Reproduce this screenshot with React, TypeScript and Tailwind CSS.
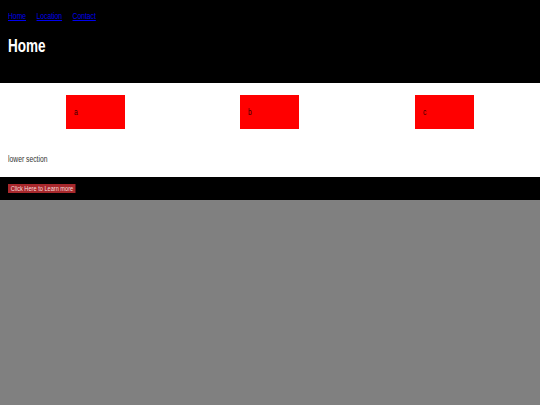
import React from "react";

const BOXES = ["a", "b", "c"];

export default function App() {
  return (
    <div className="min-h-[405px] bg-[#808080] font-['Liberation_Sans',Arial,sans-serif]">
      {/* Top header */}
      <header className="h-[83px] bg-black px-2 pt-[10px]">
        <nav className="flex origin-left scale-x-75 gap-[14px] text-[9px] leading-[13px]">
          <a href="#" className="text-[#0000ee] underline">Home</a>
          <a href="#" className="text-[#0000ee] underline">Location</a>
          <a href="#" className="text-[#0000ee] underline">Contact</a>
        </nav>
        <h1 className="mt-[13px] origin-left scale-x-75 text-[18px] font-bold leading-[20px] text-white">Home</h1>
      </header>

      {/* Boxes */}
      <section className="h-[94px] bg-white px-2 pt-3">
        <div className="grid grid-cols-3">
          {BOXES.map((b) => (
            <div key={b} className="flex justify-center">
              <div className="flex h-[34px] w-[59px] items-center bg-[#ff0000] pl-2">
                <span className="origin-left scale-x-75 text-[9px] leading-none text-[#330000]">{b}</span>
              </div>
            </div>
          ))}
        </div>
        <p className="mt-[24px] origin-left scale-x-75 text-[9px] leading-[12px] text-[#333]">lower section</p>
      </section>

      {/* Footer */}
      <footer className="flex h-[23px] items-center bg-black px-2">
        <div className="origin-left scale-x-75">
          <button className="block whitespace-nowrap bg-[#a8282c] px-[3.5px] text-[7.5px] leading-[9.5px] text-[#f5dede]">
            Click Here to Learn more
          </button>
        </div>
      </footer>
    </div>
  );
}
